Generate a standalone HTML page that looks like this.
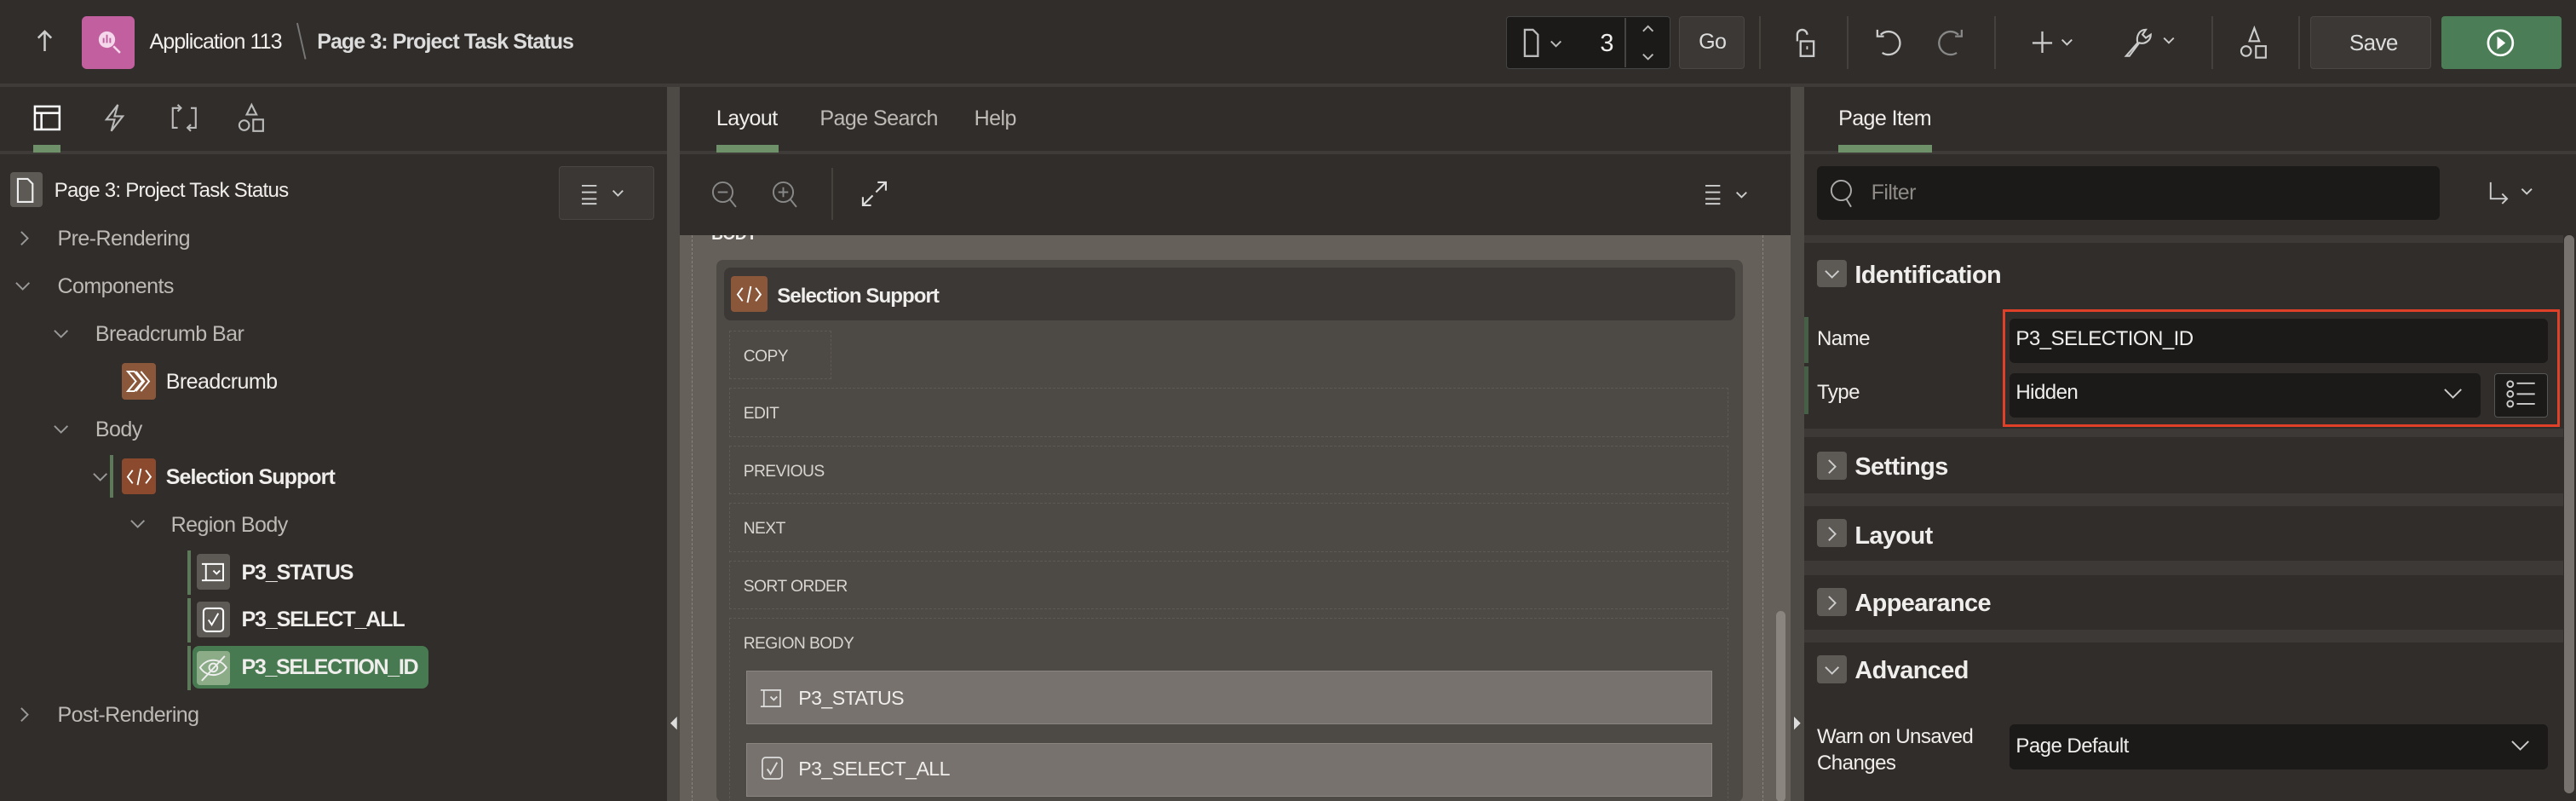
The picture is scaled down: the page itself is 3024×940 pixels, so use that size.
<!DOCTYPE html>
<html><head><meta charset="utf-8"><style>
*{box-sizing:border-box;margin:0;padding:0}
html,body{width:3024px;height:940px;overflow:hidden;background:#312d2a}
#w{zoom:1.92857;width:1568px;height:488px;position:relative;font-family:"Liberation Sans",sans-serif;color:#f0eeec;font-size:13px;letter-spacing:-0.3px;background:#312d2a;overflow:hidden}
.a{position:absolute}
.t{position:absolute;white-space:nowrap;line-height:1}
svg{position:absolute;overflow:visible}
.dim{color:#bdb9b5}
.btn{position:absolute;border:1px solid #4a4643;background:#3b3835;border-radius:2px}
.sep{position:absolute;width:1px;background:#45413d}
.row{position:absolute;left:444px;width:608px;height:30px;border:1px dashed #5e5955;font-size:10px;color:#d8d4d0;padding:10px 0 0 8px}
.sec{position:absolute;left:1098px;width:462px;background:#312d2a}
.chk{position:absolute;left:1106px;width:18px;height:17px;background:#5d5955;border-radius:2px}
.sh{position:absolute;left:1129px;font-size:15px;font-weight:bold}
.inp{position:absolute;background:#1b1a19;border-radius:3px}
</style></head><body><div id="w">
<!-- top bar -->
<div class="a" style="left:0;top:51px;width:1568px;height:2px;background:#3f3b38"></div>
<svg style="left:20px;top:17px" width="14" height="16"><path d="M7 2V14M3 6L7 2L11 6" stroke="#ccc" fill="none" stroke-width="1.3"/></svg>
<div class="a" style="left:50px;top:10px;width:32px;height:32px;background:#c15f9f;border-radius:3px"></div>
<svg style="left:58px;top:17px" width="18" height="18"><circle cx="7" cy="7" r="5" fill="#f4d7ea"/><path d="M11 11L15 15" stroke="#f4d7ea" stroke-width="1.3"/><path d="M5 9V6M7 9V4M9 9V6" stroke="#c15f9f" stroke-width="1"/></svg>
<div class="t" style="left:91px;top:19px;font-size:13px;letter-spacing:-0.5px">Application 113</div>
<svg style="left:180px;top:14px" width="8" height="24"><path d="M1 0L6 22" stroke="#777" stroke-width="1"/></svg>
<div class="t" style="left:193px;top:19px;font-size:13px;font-weight:bold;color:#ddd;letter-spacing:-0.5px">Page 3: Project Task Status</div>
<div class="a" style="left:917px;top:10px;width:100px;height:32px;background:#1b1a19;border:1px solid #444;border-radius:2px"></div>
<div class="a" style="left:989px;top:11px;width:1px;height:30px;background:#444"></div>
<svg style="left:927px;top:17px" width="30" height="18"><path d="M1 1H6L9 4V17H1Z" stroke="#bbb" fill="none" stroke-width="1.2"/><path d="M17 8L20 11L23 8" stroke="#bbb" fill="none"/></svg>
<div class="t" style="left:974px;top:19px;font-size:15px">3</div>
<svg style="left:998px;top:14px" width="10" height="26"><path d="M2 5L5 2L8 5M2 19L5 22L8 19" stroke="#bbb" fill="none"/></svg>
<div class="btn" style="left:1022px;top:10px;width:40px;height:32px"></div>
<div class="t" style="left:1034px;top:19px;font-size:13px;color:#ddd">Go</div>
<div class="sep" style="left:1071px;top:10px;height:32px"></div>
<div class="sep" style="left:1124px;top:10px;height:32px"></div>
<div class="sep" style="left:1214px;top:10px;height:32px"></div>
<div class="sep" style="left:1346px;top:10px;height:32px"></div>
<div class="sep" style="left:1399px;top:10px;height:32px"></div>
<svg style="left:1092px;top:17px" width="14" height="18"><path d="M2 8V4A3 3 0 0 1 8 4" stroke="#ccc" fill="none" stroke-width="1.2"/><rect x="4" y="8" width="8" height="9" stroke="#ccc" fill="none" stroke-width="1.2"/><path d="M8 11V13" stroke="#ccc"/></svg>
<svg style="left:1141px;top:17px" width="18" height="18"><path d="M4 4A7 7 0 1 1 5 15" stroke="#ccc" fill="none" stroke-width="1.2"/><path d="M2 1V5H6" stroke="#ccc" fill="none" stroke-width="1.2"/></svg>
<svg style="left:1178px;top:17px" width="18" height="18"><path d="M14 4A7 7 0 1 0 13 15" stroke="#888" fill="none" stroke-width="1.2"/><path d="M16 1V5H12" stroke="#888" fill="none" stroke-width="1.2"/></svg>
<svg style="left:1236px;top:18px" width="30" height="16"><path d="M7 1V14M1 8H13" stroke="#ccc" stroke-width="1.2"/><path d="M19 6L22 9L25 6" stroke="#ccc" fill="none"/></svg>
<svg style="left:1292px;top:16px" width="34" height="20"><path d="M2 18L9 10C8 6 10 2 14 2L12 5L14 7L17 5C17 9 13 11 10 10L4 18Z" stroke="#ccc" fill="none" stroke-width="1.1"/><path d="M25 7L28 10L31 7" stroke="#ccc" fill="none"/></svg>
<svg style="left:1363px;top:16px" width="18" height="20"><path d="M9 1L12 9H6Z" stroke="#ccc" fill="none" stroke-width="1.1"/><circle cx="4" cy="15" r="3" stroke="#ccc" fill="none" stroke-width="1.1"/><rect x="10" y="12" width="6" height="7" stroke="#ccc" fill="none" stroke-width="1.1"/></svg>
<div class="btn" style="left:1406px;top:10px;width:74px;height:32px"></div>
<div class="t" style="left:1430px;top:19px;font-size:13.5px;color:#ddd">Save</div>
<div class="a" style="left:1486px;top:10px;width:73px;height:32px;background:#4b7e56;border-radius:2px"></div>
<svg style="left:1513px;top:17px" width="18" height="18"><circle cx="9" cy="9" r="7.5" stroke="#fff" fill="none" stroke-width="1.4"/><path d="M7 5L12 9L7 13Z" fill="#fff"/></svg>

<!-- panel dividers -->
<div class="a" style="left:406px;top:53px;width:8px;height:435px;background:#4d4945"></div>
<div class="a" style="left:1090px;top:53px;width:8px;height:435px;background:#4d4945"></div>
<svg style="left:408px;top:436px" width="5" height="8"><path d="M4 0L0 4L4 8Z" fill="#ddd"/></svg>
<svg style="left:1092px;top:436px" width="5" height="8"><path d="M0 0L4 4L0 8Z" fill="#ddd"/></svg>
<div class="a" style="left:0;top:92px;width:406px;height:2px;background:#3f3b38"></div>
<div class="a" style="left:414px;top:92px;width:676px;height:2px;background:#3f3b38"></div>
<div class="a" style="left:1098px;top:92px;width:470px;height:2px;background:#3f3b38"></div>

<!-- left tabs -->
<svg style="left:20px;top:64px" width="18" height="16"><rect x="1" y="1" width="15" height="14" stroke="#fff" fill="none" stroke-width="1.3"/><path d="M1 5H16M5 5V15" stroke="#fff" stroke-width="1.3"/></svg>
<svg style="left:63px;top:63px" width="14" height="18"><path d="M9 1L2 10H7L5 17L12 8H7Z" stroke="#bbb" fill="none" stroke-width="1.1"/></svg>
<svg style="left:102px;top:63px" width="20" height="18"><path d="M7 3H3V15H6M13 15H17V3H14" stroke="#bbb" fill="none" stroke-width="1.1"/><path d="M6 1L8 3L6 5M14 13L12 15L14 17" stroke="#bbb" fill="none" stroke-width="1.1"/></svg>
<svg style="left:144px;top:63px" width="18" height="18"><path d="M9 1L12 7H6Z" stroke="#bbb" fill="none" stroke-width="1.1"/><circle cx="4.5" cy="13.5" r="3" stroke="#bbb" fill="none" stroke-width="1.1"/><rect x="10" y="10" width="6" height="7" stroke="#bbb" fill="none" stroke-width="1.1"/></svg>
<div class="a" style="left:20px;top:88px;width:17px;height:5px;background:#6e9169"></div>

<!-- tree -->
<div class="a" style="left:6px;top:105px;width:20px;height:21px;background:#5d5955;border-radius:2px"></div>
<svg style="left:10px;top:108px" width="12" height="16"><path d="M1 1H7L10 4V15H1Z" stroke="#eee" fill="none" stroke-width="1.1"/></svg>
<div class="t" style="left:33px;top:110px;font-size:12.5px;letter-spacing:-0.4px">Page 3: Project Task Status</div>
<div class="btn" style="left:340px;top:101px;width:58px;height:33px;background:#3a3734"></div>
<svg style="left:354px;top:112px" width="30" height="12"><path d="M0 1H9M0 5H9M0 9H9M0 12H9" stroke="#ccc" stroke-width="1"/><path d="M19 4L22 7L25 4" stroke="#ccc" fill="none"/></svg>
<svg style="left:11px;top:140px" width="8" height="10"><path d="M2 1L6 5L2 9" stroke="#999" fill="none"/></svg>
<div class="t dim" style="left:35px;top:139px">Pre-Rendering</div>
<svg style="left:9px;top:170px" width="10" height="8"><path d="M1 2L5 6L9 2" stroke="#999" fill="none"/></svg>
<div class="t dim" style="left:35px;top:168px">Components</div>
<svg style="left:32px;top:199px" width="10" height="8"><path d="M1 2L5 6L9 2" stroke="#999" fill="none"/></svg>
<div class="t dim" style="left:58px;top:197px">Breadcrumb Bar</div>
<div class="a" style="left:74px;top:221px;width:21px;height:22px;background:#8b573a;border-radius:2px"></div>
<svg style="left:77px;top:225px" width="16" height="14"><path d="M1 1H5L10 7L5 13H1L6 7Z M6 1L11 7L6 13 M9 1L14 7L9 13" stroke="#fff" fill="none" stroke-width="1"/></svg>
<div class="t" style="left:101px;top:226px">Breadcrumb</div>
<svg style="left:32px;top:257px" width="10" height="8"><path d="M1 2L5 6L9 2" stroke="#999" fill="none"/></svg>
<div class="t dim" style="left:58px;top:255px">Body</div>
<svg style="left:56px;top:286px" width="10" height="8"><path d="M1 2L5 6L9 2" stroke="#999" fill="none"/></svg>
<div class="a" style="left:67px;top:277px;width:2px;height:26px;background:#5c7a59"></div>
<div class="a" style="left:74px;top:279px;width:21px;height:22px;background:#8b4a2e;border-radius:2px"></div>
<svg style="left:77px;top:284px" width="16" height="12"><path d="M4 2L1 6L4 10M12 2L15 6L12 10M9 1L7 11" stroke="#fff" fill="none" stroke-width="1"/></svg>
<div class="t" style="left:101px;top:284px;font-weight:bold;letter-spacing:-0.5px">Selection Support</div>
<svg style="left:79px;top:315px" width="10" height="8"><path d="M1 2L5 6L9 2" stroke="#999" fill="none"/></svg>
<div class="t dim" style="left:104px;top:313px">Region Body</div>
<div class="a" style="left:114px;top:335px;width:2px;height:27px;background:#5c7a59"></div>
<div class="a" style="left:114px;top:364px;width:2px;height:27px;background:#5c7a59"></div>
<div class="a" style="left:114px;top:393px;width:2px;height:27px;background:#5c7a59"></div>
<div class="a" style="left:120px;top:337px;width:20px;height:22px;background:#5d5955;border-radius:2px"></div>
<svg style="left:122px;top:341px" width="16" height="14"><path d="M1 2H6M1 12H6M3.5 2V12M3.5 2H14V12H3.5" stroke="#fff" fill="none" stroke-width="1"/><path d="M8 6L10 8L12 6" stroke="#fff" fill="none"/></svg>
<div class="t" style="left:147px;top:342px;font-weight:bold;letter-spacing:-0.6px">P3_STATUS</div>
<div class="a" style="left:120px;top:366px;width:20px;height:22px;background:#5d5955;border-radius:2px"></div>
<svg style="left:123px;top:369px" width="15" height="16"><rect x="1" y="1" width="12" height="14" rx="2" stroke="#fff" fill="none" stroke-width="1.1"/><path d="M4 8L6 11L10 4" stroke="#fff" fill="none"/></svg>
<div class="t" style="left:147px;top:371px;font-weight:bold;letter-spacing:-0.6px">P3_SELECT_ALL</div>
<div class="a" style="left:117px;top:393px;width:144px;height:26px;background:#477a50;border-radius:4px"></div>
<div class="a" style="left:120px;top:396px;width:20px;height:21px;background:#8cac88;border-radius:2px"></div>
<svg style="left:121px;top:398px" width="18" height="17"><path d="M1 8C5 2 13 2 17 8C13 14 5 14 1 8Z" stroke="#eee" fill="none" stroke-width="1"/><circle cx="9" cy="8" r="2.5" stroke="#eee" fill="none"/><path d="M2 16L16 1" stroke="#eee"/></svg>
<div class="t" style="left:147px;top:400px;font-weight:bold;letter-spacing:-0.7px">P3_SELECTION_ID</div>
<svg style="left:11px;top:430px" width="8" height="10"><path d="M2 1L6 5L2 9" stroke="#999" fill="none"/></svg>
<div class="t dim" style="left:35px;top:429px">Post-Rendering</div>

<!-- middle -->
<div class="t" style="left:436px;top:66px">Layout</div>
<div class="a" style="left:436px;top:88px;width:38px;height:5px;background:#6e9169"></div>
<div class="t dim" style="left:499px;top:66px">Page Search</div>
<div class="t dim" style="left:593px;top:66px">Help</div>
<svg style="left:433px;top:110px" width="18" height="18"><circle cx="7" cy="7" r="6" stroke="#888" fill="none"/><path d="M4 7H10M11 11L15 16" stroke="#888"/></svg>
<svg style="left:470px;top:110px" width="18" height="18"><circle cx="7" cy="7" r="6" stroke="#888" fill="none"/><path d="M4 7H10M7 4V10M11 11L15 16" stroke="#888"/></svg>
<div class="sep" style="left:506px;top:102px;height:32px"></div>
<svg style="left:524px;top:110px" width="16" height="16"><path d="M10 1H15V6M15 1L9 7M1 10V15H6M1 15L7 9" stroke="#ddd" fill="none" stroke-width="1.1"/></svg>
<svg style="left:1038px;top:112px" width="30" height="12"><path d="M0 1H9M0 5H9M0 9H9M0 12H9" stroke="#ccc"/><path d="M19 5L22 8L25 5" stroke="#ccc" fill="none"/></svg>
<div class="a" style="left:414px;top:143px;width:676px;height:345px;background:#656059;overflow:hidden">
<div class="t" style="left:19px;top:-5px;font-size:10px;font-weight:bold">BODY</div>
</div>
<div class="a" style="left:421px;top:143px;width:1px;height:345px;border-left:1px dashed #8a857f"></div>
<div class="a" style="left:1073px;top:143px;width:1px;height:345px;border-left:1px dashed #8a857f"></div>
<div class="a" style="left:436px;top:158px;width:625px;height:330px;background:#4d4945;border-radius:4px"></div>
<div class="a" style="left:441px;top:163px;width:615px;height:32px;background:#3b3835;border-radius:4px"></div>
<div class="a" style="left:445px;top:168px;width:22px;height:22px;background:#8b573a;border-radius:2px"></div>
<svg style="left:448px;top:173px" width="16" height="12"><path d="M4 2L1 6L4 10M12 2L15 6L12 10M9 1L7 11" stroke="#fff" fill="none" stroke-width="1"/></svg>
<div class="t" style="left:473px;top:174px;font-weight:bold;font-size:12.5px;letter-spacing:-0.5px">Selection Support</div>
<div class="row" style="width:62px;top:201px">COPY</div>
<div class="row" style="top:236px">EDIT</div>
<div class="row" style="top:271px">PREVIOUS</div>
<div class="row" style="top:306px">NEXT</div>
<div class="row" style="top:341px">SORT ORDER</div>
<div class="row" style="top:376px;height:120px">REGION BODY</div>
<div class="a" style="left:454px;top:408px;width:588px;height:33px;background:#77726d;border:1px solid #8a857f"></div>
<svg style="left:462px;top:418px" width="16" height="14"><path d="M1 2H5M1 12H5M3 2V12M3 2H13V12H3" stroke="#ddd" fill="none" stroke-width="0.9"/><path d="M7 6L9 8L11 6" stroke="#ddd" fill="none"/></svg>
<div class="t" style="left:486px;top:419px;font-size:12px">P3_STATUS</div>
<div class="a" style="left:454px;top:452px;width:588px;height:33px;background:#77726d;border:1px solid #8a857f"></div>
<svg style="left:463px;top:460px" width="14" height="16"><rect x="1" y="1" width="12" height="13" rx="2" stroke="#ddd" fill="none" stroke-width="0.9"/><path d="M4 8L6 11L10 4" stroke="#ddd" fill="none"/></svg>
<div class="t" style="left:486px;top:462px;font-size:12px">P3_SELECT_ALL</div>
<div class="a" style="left:1081px;top:372px;width:6px;height:116px;background:#8a857f;border-radius:3px"></div>

<!-- right -->
<div class="t" style="left:1119px;top:66px">Page Item</div>
<div class="a" style="left:1119px;top:88px;width:57px;height:5px;background:#6e9169"></div>
<div class="inp" style="left:1106px;top:101px;width:379px;height:33px"></div>
<svg style="left:1113px;top:109px" width="18" height="20"><circle cx="8" cy="7" r="6" stroke="#aaa" fill="none"/><path d="M11 12L14 17" stroke="#aaa"/></svg>
<div class="t" style="left:1139px;top:111px;color:#8e8a86">Filter</div>
<svg style="left:1513px;top:110px" width="30" height="16"><path d="M3 1V11H13M10 8L13 11L10 14" stroke="#ccc" fill="none"/><path d="M22 5L25 8L28 5" stroke="#ccc" fill="none"/></svg>
<div class="a" style="left:1098px;top:143px;width:462px;height:345px;background:#3d3936"></div>
<div class="sec" style="top:148px;height:113px"></div>
<div class="sec" style="top:266px;height:34px"></div>
<div class="sec" style="top:308px;height:33px"></div>
<div class="sec" style="top:350px;height:33px"></div>
<div class="sec" style="top:391px;height:97px"></div>
<div class="a" style="left:1560px;top:143px;width:8px;height:345px;background:#312d2a"></div>
<div class="a" style="left:1561px;top:143px;width:6px;height:340px;background:#77726d;border-radius:3px"></div>
<div class="chk" style="top:158px"></div><svg style="left:1110px;top:163px" width="10" height="8"><path d="M1 2L5 6L9 2" stroke="#ccc" fill="none"/></svg>
<div class="sh" style="top:159px">Identification</div>
<div class="a" style="left:1098px;top:193px;width:3px;height:28px;background:#466048"></div>
<div class="a" style="left:1098px;top:223px;width:3px;height:29px;background:#466048"></div>
<div class="t" style="left:1106px;top:200px;font-size:12.5px">Name</div>
<div class="t" style="left:1106px;top:233px;font-size:12.5px">Type</div>
<div class="a" style="left:1219px;top:188px;width:339px;height:72px;border:2px solid #e04028"></div>
<div class="inp" style="left:1223px;top:194px;width:328px;height:27px"></div>
<div class="t" style="left:1227px;top:200px;font-size:12.5px">P3_SELECTION_ID</div>
<div class="inp" style="left:1223px;top:227px;width:287px;height:27px"></div>
<div class="t" style="left:1227px;top:233px;font-size:12.5px">Hidden</div>
<svg style="left:1487px;top:236px" width="12" height="8"><path d="M1 1L6 6L11 1" stroke="#ccc" fill="none"/></svg>
<div class="a" style="left:1518px;top:227px;width:33px;height:27px;background:#1b1a19;border:1px solid #555;border-radius:2px"></div>
<svg style="left:1525px;top:231px" width="20" height="18"><circle cx="3" cy="3" r="1.8" stroke="#ccc" fill="none"/><circle cx="3" cy="9" r="1.8" stroke="#ccc" fill="none"/><circle cx="3" cy="15" r="1.8" stroke="#ccc" fill="none"/><path d="M7 2.5H18M7 9H18M7 15H18" stroke="#ccc"/></svg>
<div class="chk" style="top:275px"></div><svg style="left:1111px;top:279px" width="8" height="10"><path d="M2 1L6 5L2 9" stroke="#ccc" fill="none"/></svg>
<div class="sh" style="top:276px">Settings</div>
<div class="chk" style="top:316px"></div><svg style="left:1111px;top:320px" width="8" height="10"><path d="M2 1L6 5L2 9" stroke="#ccc" fill="none"/></svg>
<div class="sh" style="top:318px">Layout</div>
<div class="chk" style="top:358px"></div><svg style="left:1111px;top:362px" width="8" height="10"><path d="M2 1L6 5L2 9" stroke="#ccc" fill="none"/></svg>
<div class="sh" style="top:359px">Appearance</div>
<div class="chk" style="top:399px"></div><svg style="left:1110px;top:404px" width="10" height="8"><path d="M1 2L5 6L9 2" stroke="#ccc" fill="none"/></svg>
<div class="sh" style="top:400px">Advanced</div>
<div class="t" style="left:1106px;top:441px;font-size:12.5px;line-height:16px;white-space:normal;width:110px">Warn on Unsaved Changes</div>
<div class="inp" style="left:1223px;top:441px;width:328px;height:27px"></div>
<div class="t" style="left:1227px;top:448px;font-size:12.5px">Page Default</div>
<svg style="left:1528px;top:450px" width="12" height="8"><path d="M1 1L6 6L11 1" stroke="#ccc" fill="none"/></svg>
</div></body></html>
